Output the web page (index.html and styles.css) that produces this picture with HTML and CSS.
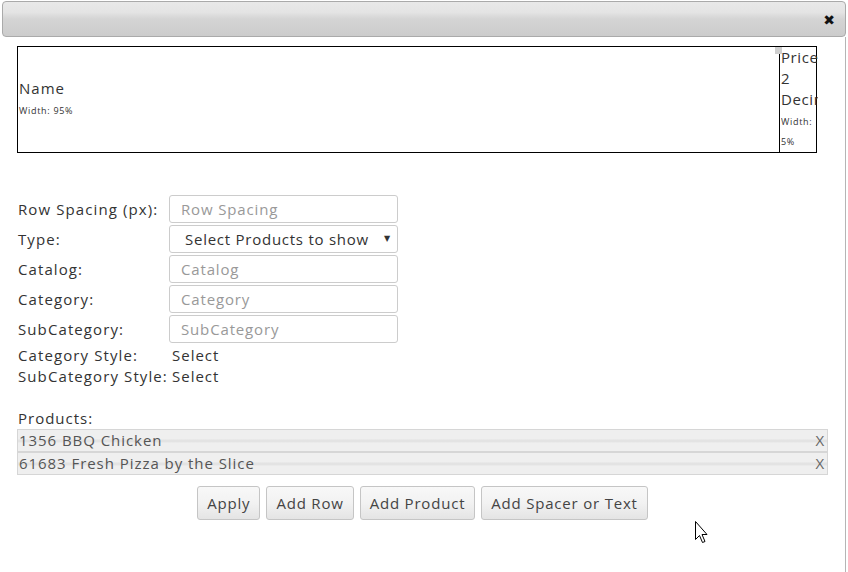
FILE: index.html
```html
<!DOCTYPE html>
<html>
  <head>
    <link rel="stylesheet" href="styles.css">
  </head>
  <body>
    <div class="dialog">
      <div class="titlebar">
        <span class="close">&#10006;</span>
      </div>
      <div class="content">
        <table class="layout-table">
          <tr>
            <td class="col-name">
              <div class="col-title">Name</div>
              <div class="col-width">Width: 95%</div>
            </td>
            <td class="col-price">
              <span class="handle"></span>
              <div class="col-title">Price 2 Decimals</div>
              <div class="col-width">Width: 5%</div>
            </td>
          </tr>
        </table>

        <div class="form">
          <div class="row">
            <label>Row Spacing (px):</label>
            <input class="field" placeholder="Row Spacing">
          </div>
          <div class="row">
            <label>Type:</label>
            <div class="field select-box">
              <span>Select Products to show</span>
              <span class="arrow">&#9660;</span>
            </div>
          </div>
          <div class="row">
            <label>Catalog:</label>
            <input class="field" placeholder="Catalog">
          </div>
          <div class="row">
            <label>Category:</label>
            <input class="field" placeholder="Category">
          </div>
          <div class="row">
            <label>SubCategory:</label>
            <input class="field" placeholder="SubCategory">
          </div>
          <div class="row short">
            <label>Category Style:</label>
            <span class="pick">Select</span>
          </div>
          <div class="row short">
            <label>SubCategory Style:</label>
            <span class="pick">Select</span>
          </div>
        </div>

        <div class="products-label">Products:</div>
        <div class="products">
          <div class="product"><span>1356 BBQ Chicken</span><span class="remove">X</span></div>
          <div class="product"><span>61683 Fresh Pizza by the Slice</span><span class="remove">X</span></div>
        </div>

        <div class="buttons">
          <div class="btn">Apply</div>
          <div class="btn">Add Row</div>
          <div class="btn">Add Product</div>
          <div class="btn">Add Spacer or Text</div>
        </div>
      </div>
    </div>

    <svg class="cursor" width="14" height="26" viewBox="0 0 14 26">
      <path d="M1.5 1.5 L1.5 19.5 L5.5 15.5 L8.5 22.5 L11 21.5 L8 14.5 L13 14.5 Z" fill="#fff" stroke="#000" stroke-width="1" stroke-linejoin="miter"/>
    </svg>
  </body>
</html>
```

FILE: styles.css
```css
body {
    margin: 0;
    font-family: "Open Sans", "DejaVu Sans", sans-serif;
    font-size: 15px;
    letter-spacing: 1px;
    color: #333;
    background: #fff;
}
.dialog {
    width: 844px;
    margin: 1px 0 0 2px;
}
.titlebar {
    height: 34px;
    border: 1px solid #aaa;
    border-radius: 4px;
    background: linear-gradient(#e9e9e9 0, #e4e4e4 30%, #d4d4d4 50%, #cccccc 100%);
    display: flex;
    align-items: center;
    justify-content: flex-end;
    padding-right: 10px;
}
.close {
    font-family: "DejaVu Sans", sans-serif;
    font-size: 14px;
    font-weight: bold;
    color: #111;
    margin-top: 2px;
    letter-spacing: 0;
}
.content {
    height: 533px;
    border-right: 1px solid #b5b5b5;
    padding: 9px 17px 0 15px;
}

/* column layout preview */
.layout-table {
    width: 800px;
    height: 107px;
    border-collapse: collapse;
    table-layout: fixed;
    border: 1px solid #000;
}
.layout-table td {
    border: 1px solid #000;
    padding: 0 0 0 1px;
    vertical-align: middle;
    overflow: hidden;
}
.col-name {
    width: 760px;
}
.col-price {
    position: relative;
    overflow: visible !important;
}
.col-price .col-title,
.col-price .col-width {
    width: 37px;
    overflow: hidden;
}
.col-price .col-title {
    height: 63px;
    letter-spacing: 0.6px;
}
.col-title {
    line-height: 21px;
}
.col-width {
    font-size: 9px;
    line-height: 20px;
    margin-top: 2px;
    letter-spacing: 0.7px;
}
.handle {
    position: absolute;
    left: -5px;
    top: 0;
    width: 7px;
    height: 7px;
    background: #cfcfcf;
}

/* settings */
.form {
    margin-top: 41px;
}
.row {
    display: grid;
    grid-template-columns: 152px 229px;
    align-items: center;
    height: 30px;
}
.row.short {
    height: 21px;
}
.row label {
    padding-left: 1px;
    white-space: nowrap;
    letter-spacing: 1.1px;
}
.field {
    box-sizing: border-box;
    height: 28px;
    width: 229px;
    border: 1px solid #ccc;
    border-radius: 3px;
    padding: 0 11px;
    font-family: inherit;
    font-size: 15px;
    letter-spacing: 0.85px;
    color: #333;
    background: #fff;
    outline: none;
}
.field::placeholder {
    color: #999;
}
.select-box {
    display: flex;
    align-items: center;
    justify-content: space-between;
    padding: 0 6px 0 15px;
    letter-spacing: 0.75px;
}
.arrow {
    font-size: 8px;
    color: #333;
    margin-top: -3px;
}
.pick {
    padding-left: 3px;
}

/* products */
.products-label {
    margin-top: 22px;
    line-height: 21px;
    padding-left: 1px;
}
.product {
    box-sizing: border-box;
    height: 23px;
    border: 1px solid #d6d6d6;
    background: linear-gradient(#efefef 0, #efefef 42%, #e3e3e3 48%, #e3e3e3 56%, #efefef 62%, #efefef 100%);
    display: flex;
    justify-content: space-between;
    align-items: center;
    padding: 0 2px 1px 1px;
    color: #555;
    letter-spacing: 0.95px;
}
.remove {
    color: #666;
}

.buttons {
    margin-top: 11px;
    display: flex;
    justify-content: center;
    gap: 6px;
}
.btn {
    box-sizing: border-box;
    height: 34px;
    padding: 0 9px;
    border: 1px solid #c5c5c5;
    border-radius: 3px;
    background: linear-gradient(#f8f8f8 0, #f2f2f2 50%, #e4e4e4 100%);
    display: flex;
    align-items: center;
    color: #444;
    letter-spacing: 0.8px;
}

.cursor {
    position: absolute;
    left: 694px;
    top: 520px;
}
```
